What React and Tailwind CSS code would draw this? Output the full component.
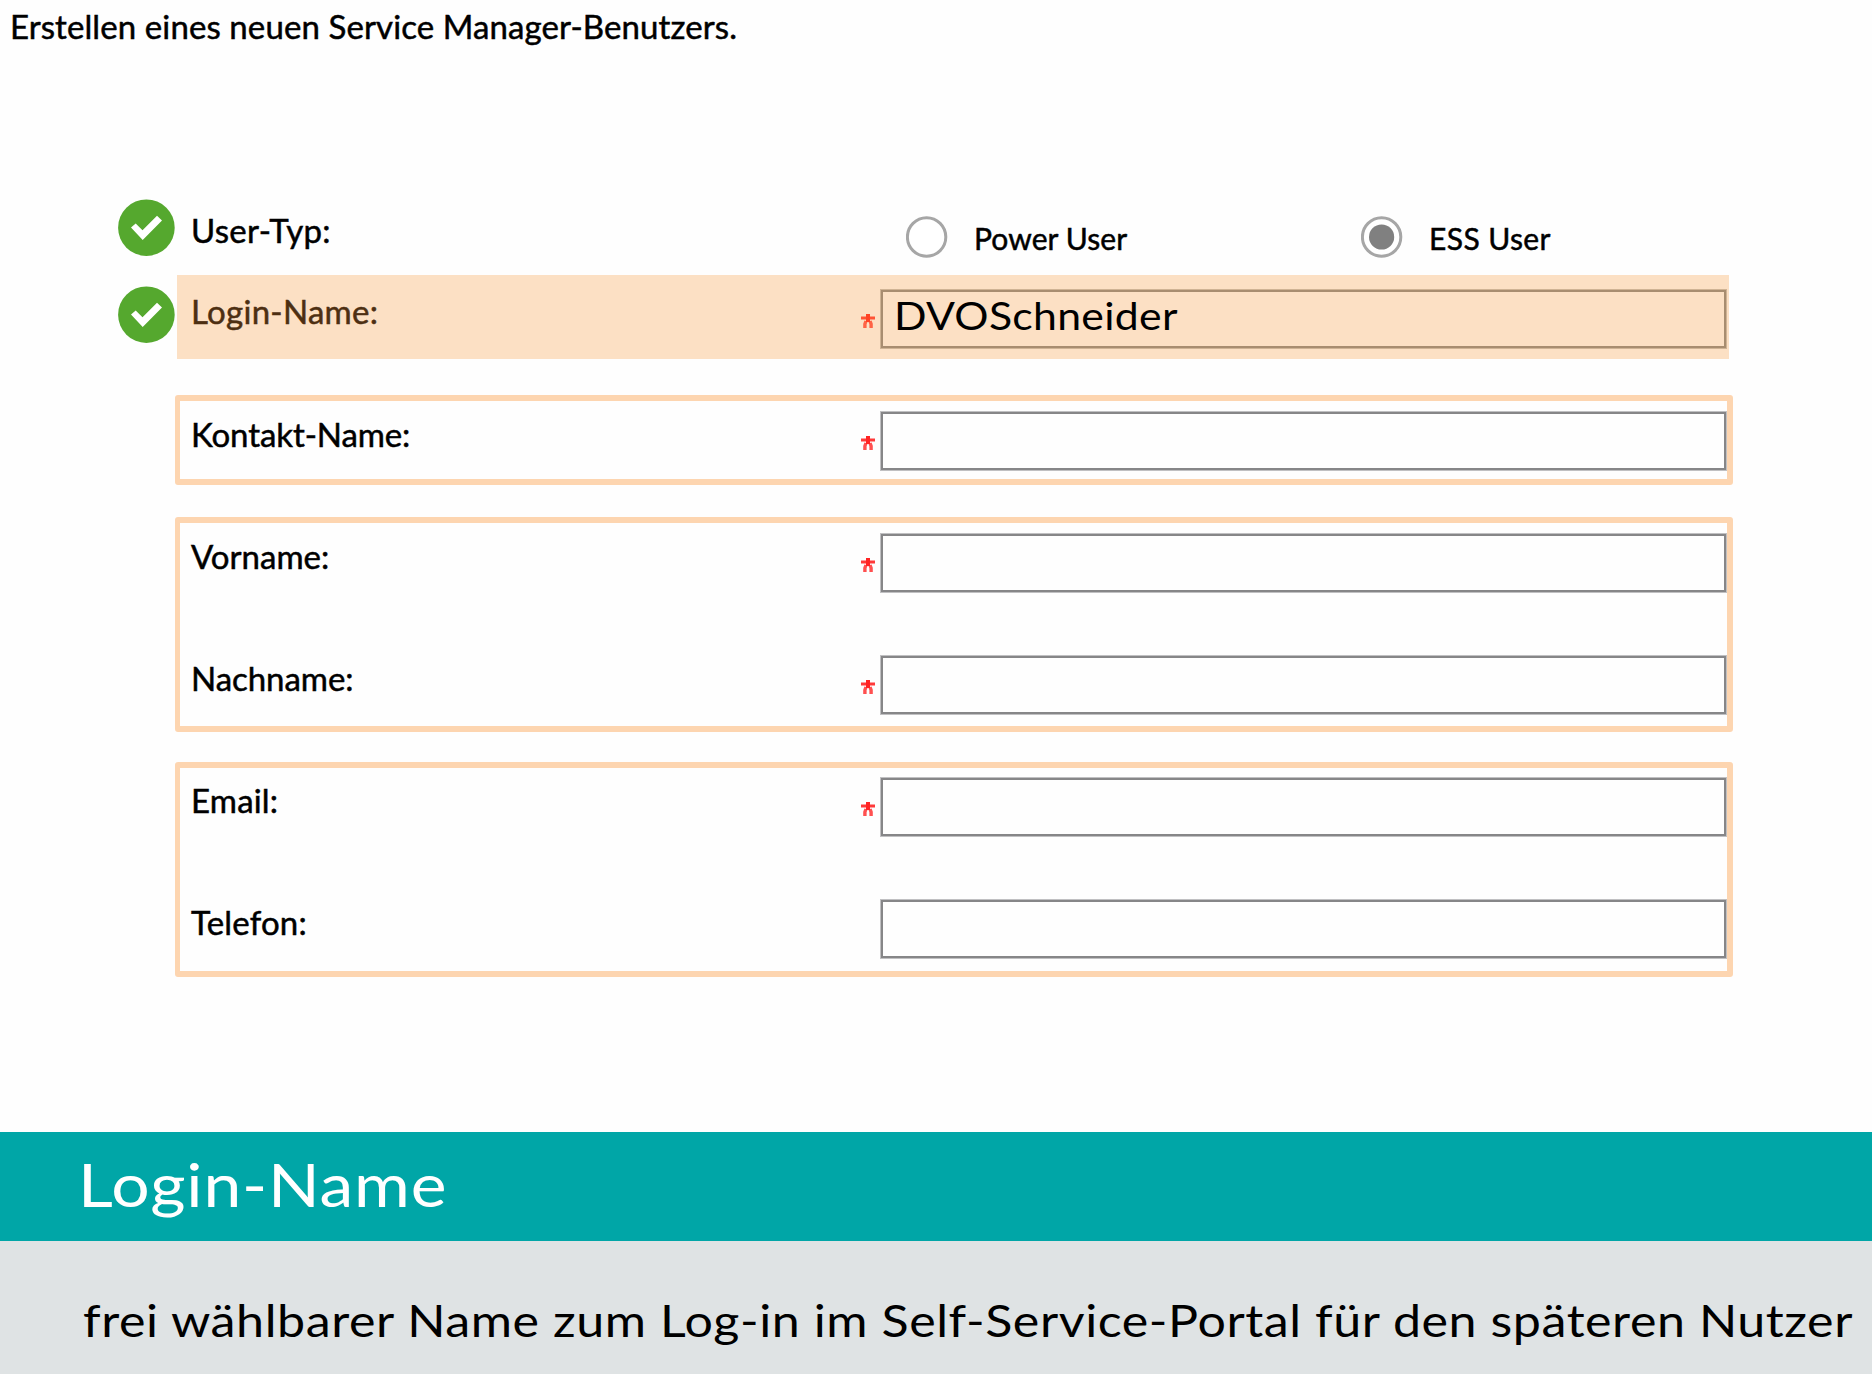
function CheckBadge() {
  return (
    <svg viewBox="0 0 57 57" className="block size-[57px] shrink-0">
      <circle cx="28.4" cy="28.7" r="28.3" fill="#55a82e" />
      <path d="M13 28.6 17.7 24.4 24.5 31.2 39 16.8 44 21.6 24.7 41Z" fill="#fff" />
    </svg>
  );
}

function Required({ color = "#ff2424" }) {
  return (
    <svg viewBox="0 0 14 14" className="mt-[25px] block size-[14px] shrink-0" fill="none" stroke={color}>
      <path d="M0 4H14" strokeWidth="3" strokeOpacity="0.9" />
      <path d="M7 0V8" strokeWidth="4" />
      <path d="M5 7 3.9 10V14M9 7 10.1 10V14" strokeWidth="3.4" strokeOpacity="0.8" />
    </svg>
  );
}

function Radio({ checked }) {
  return (
    <svg viewBox="0 0 42 42" className="block size-[42px] shrink-0">
      <circle cx="20.6" cy="21" r="19.2" fill="#fff" stroke="#a6a6a6" strokeWidth="3" />
      {checked && <circle cx="20.6" cy="21" r="12.6" fill="#808080" />}
    </svg>
  );
}

function Label({ children, className = "" }) {
  return (
    <div className={`mt-[3px] h-10 whitespace-nowrap text-[33px] leading-10 [-webkit-text-stroke:0.5px] ${className}`}>
      {children}
    </div>
  );
}

function Field({ label, spacing, required = true, active = false, value }) {
  return (
    <div className="flex h-[60px] items-start">
      <div className={active ? "-mt-px w-[669px] text-[#4d2f12]" : "w-[669px]"}>
        <Label className={spacing}>{label}</Label>
      </div>
      <div className="w-[20px] pl-px">{required && <Required color={active ? "#ff4426" : "#ff2424"} />}</div>
      <div
        className={
          active
            ? "h-[60px] w-[847px] border border-[#cfb394]"
            : "h-[60px] w-[847px] border border-[#c0c0c2]"
        }
      >
        <div
          className={
            active
              ? "flex h-[58px] items-start border-2 border-[#a88d70]"
              : "h-[58px] border-2 border-[#868688]"
          }
        >
          {value && (
            <span className="ml-[11px] origin-left scale-x-111 whitespace-nowrap text-[38.5px] leading-[47px] tracking-[0.3px] text-black">
              {value}
            </span>
          )}
        </div>
      </div>
    </div>
  );
}

function Group({ children, className = "" }) {
  return (
    <section
      className={`ml-[175px] flex w-[1558px] flex-col gap-[62px] rounded-[3px] border-y-6 border-r-6 border-l-5 border-[#fdd5b0] bg-[#fefefe] pl-[11px] ${className}`}
    >
      {children}
    </section>
  );
}

export default function App() {
  return (
    <main className="flex h-[1374px] w-[1872px] flex-col overflow-hidden bg-[#fefefe] font-['Lato',sans-serif] text-black">
      <h1 className="mt-[6px] ml-[10px] h-10 whitespace-nowrap text-[33px] leading-10 tracking-[0.1px] [-webkit-text-stroke:0.5px]">
        Erstellen eines neuen Service Manager-Benutzers.
      </h1>

      <div className="mt-[153px] ml-[118px] flex h-[76px] items-start">
        <CheckBadge />
        <div className="mt-[8px] ml-[16px] w-[715px]">
          <Label className="tracking-[0.3px]">User-Typ:</Label>
        </div>
        <div className="mt-[16px] flex w-[455px] items-center gap-[26px]">
          <Radio />
          <span className="mt-[3px] text-[30px] leading-10 tracking-[0.1px] [-webkit-text-stroke:0.5px]">
            Power User
          </span>
        </div>
        <div className="mt-[16px] flex items-center gap-[26px]">
          <Radio checked />
          <span className="mt-[3px] text-[30px] leading-10 tracking-[0.4px] [-webkit-text-stroke:0.5px]">
            ESS User
          </span>
        </div>
      </div>

      <div className="ml-[118px] flex items-start">
        <div className="mt-[11px] w-[59px]">
          <CheckBadge />
        </div>
        <div className="h-[84px] w-[1552px] bg-[#fce0c4] pt-[14px] pl-[14px]">
          <Field label="Login-Name:" spacing="tracking-[0.3px]" value="DVOSchneider" active />
        </div>
      </div>

      <Group className="mt-[36px] h-[90px] pt-[10px]">
        <Field label="Kontakt-Name:" spacing="tracking-[-0.1px]" />
      </Group>
      <Group className="mt-[32px] h-[215px] pt-[10px]">
        <Field label="Vorname:" spacing="tracking-[0px]" />
        <Field label="Nachname:" spacing="tracking-[-0.05px]" />
      </Group>
      <Group className="mt-[30px] h-[215px] pt-[9px]">
        <Field label="Email:" spacing="tracking-[0.2px]" />
        <Field label="Telefon:" spacing="tracking-[0.2px]" required={false} />
      </Group>

      <footer className="mt-[155px] flex flex-col whitespace-nowrap">
        <h2 className="h-[109px] bg-[#00a6a7] pt-[12px] pl-[78px] text-white">
          <span className="block origin-left scale-x-114 text-[59.5px] leading-[80px] tracking-[0.7px]">Login-Name</span>
        </h2>
        <p className="h-[133px] bg-[#dfe3e4] pt-[49px] pl-[83px]">
          <span className="block origin-left scale-x-[1.127] text-[44.5px] leading-[60px] tracking-[0.5px]">
            frei wählbarer Name zum Log-in im Self-Service-Portal für den späteren Nutzer
          </span>
        </p>
      </footer>
    </main>
  );
}
